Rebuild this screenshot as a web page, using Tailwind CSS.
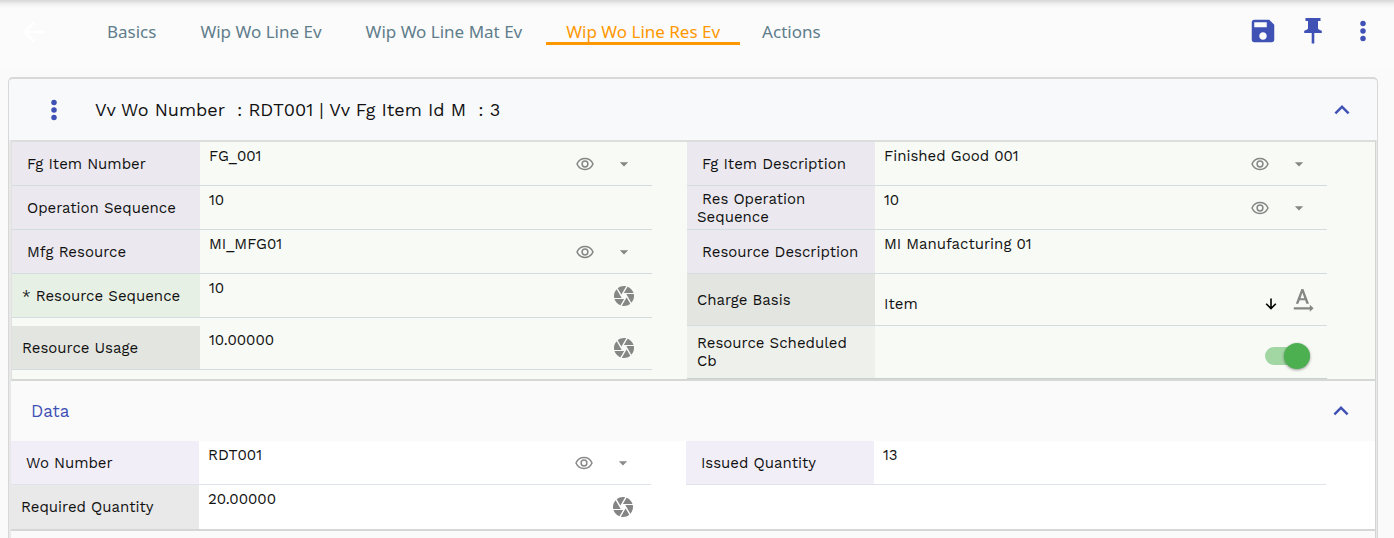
<!DOCTYPE html>
<html lang="en">
<head>
<meta charset="utf-8">
<meta name="viewport" content="width=device-width, initial-scale=1">
<title>Wip Wo Line Res Ev</title>
<script src="https://cdn.jsdelivr.net/npm/@tailwindcss/browser@4"></script>
</head>
<body class="flex h-screen flex-col overflow-hidden bg-[#fafafa] font-['Work_Sans','Open_Sans',sans-serif] text-[15px] leading-[18px] text-[#111]">
<svg class="hidden" aria-hidden="true">
  <symbol id="dots" viewBox="0 0 24 24"><circle cx="12" cy="6" r="2.2"/><circle cx="12" cy="12" r="2.2"/><circle cx="12" cy="18" r="2.2"/></symbol>
  <symbol id="up" viewBox="0 0 24 24"><path d="M12 8l-6 6 1.41 1.41L12 10.83l4.59 4.58L18 14z"/></symbol>
  <symbol id="eye" viewBox="0 0 18 14"><path d="M1 7C2.6 3.4 5.6 1.6 9 1.6S15.400 3.400 17 7c-1.600 3.600-4.600 5.400-8 5.400S2.600 10.600 1 7z" fill="none" stroke="currentColor" stroke-width="1.5"/><circle cx="9" cy="7" r="2.9" fill="none" stroke="currentColor" stroke-width="1.5"/></symbol>
  <symbol id="caret" viewBox="0 0 24 24"><path d="M7 10l5 5 5-5z"/></symbol>
  <symbol id="shutter" viewBox="0 0 24 24"><path d="M9.400 10.500l4.770-8.260C13.470 2.090 12.750 2 12 2c-2.400 0-4.600.85-6.320 2.250l3.660 6.350.06-.1zM21.540 9c-.92-2.920-3.150-5.260-6-6.340L11.880 9h9.660zm.26 1h-7.490l.29.5 4.760 8.250C21 16.970 22 14.610 22 12c0-.69-.07-1.350-.2-2zM8.540 12l-3.900-6.750C3.010 7.030 2 9.390 2 12c0 .69.07 1.350.2 2h7.490l-1.150-2zm-6.080 3c.92 2.920 3.150 5.260 6 6.340L12.120 15H2.460zm11.270 0l-3.900 6.760c.7.15 1.420.24 2.170.24 2.400 0 4.600-.85 6.320-2.250l-3.660-6.350-.93 1.600z"/></symbol>
</svg>

<header class="flex h-[77px] shrink-0 items-start bg-[linear-gradient(#d6d6d6,#f0f0f0_4px,#fbfbfb_8px,#fbfbfb_68px,#fafafa_68px)] pr-4 pl-[17px]">
  <button type="button" aria-label="Back" class="mt-4 text-white"><svg class="size-8 fill-current" viewBox="0 0 24 24"><path d="M20 11H7.830l5.590-5.590L12 4l-8 8 8 8 1.410-1.410L7.830 13H20v-2z"/></svg></button>
  <nav class="mt-4 ml-[38px] flex gap-1 font-['Segoe_UI','Noto_Sans',sans-serif] text-[17px] leading-[26px] text-[#607d8b]">
    <a href="#" class="h-[29px] px-5 pt-[3px]">Basics</a>
    <a href="#" class="h-[29px] px-5 pt-[3px]">Wip Wo Line Ev</a>
    <a href="#" class="h-[29px] px-5 pt-[3px]">Wip Wo Line Mat Ev</a>
    <a href="#" aria-current="page" class="h-[29px] border-b-[3px] border-[#ff9800] px-5 pt-[3px] text-[#ff9800]">Wip Wo Line Res Ev</a>
    <a href="#" class="h-[29px] px-[18px] pt-[3px]">Actions</a>
  </nav>
  <div class="mt-4 ml-auto flex items-center gap-5 text-[#3f51b5]">
    <button type="button" aria-label="Save"><svg class="size-[30px] fill-current" viewBox="0 0 24 24"><path d="M17 3H5c-1.110 0-2 .9-2 2v14c0 1.100.89 2 2 2h14c1.100 0 2-.9 2-2V7l-4-4zm-5 16c-1.660 0-3-1.340-3-3s1.340-3 3-3 3 1.340 3 3-1.340 3-3 3zm3-10H5V5h10v4z"/></svg></button>
    <button type="button" aria-label="Pin"><svg class="size-[30px] fill-current" viewBox="0 0 30 30"><path d="M7.500 2h15v3H20v7.500c.5 1.200 1.800 1.700 3.800 2.300V17h-7.500v10.500h-2.600V17H6.200v-2.200c2-.6 3.300-1.100 3.800-2.300V5H7.500z"/></svg></button>
    <button type="button" aria-label="More"><svg class="size-[30px] fill-current"><use href="#dots"/></svg></button>
  </div>
</header>

<main class="mr-4 ml-2 flex flex-1 flex-col rounded-t-[5px] border-x border-t-2 border-[#d8d8d8] bg-[#f8f9fb]">
  <div class="flex h-[61px] shrink-0 items-center pr-5 pl-[30px]">
    <button type="button" aria-label="Record menu" class="text-[#3f51b5]"><svg class="size-[30px] fill-current"><use href="#dots"/></svg></button>
    <h1 class="ml-[26px] text-[18px] leading-6 whitespace-pre">Vv Wo Number  : RDT001 | Vv Fg Item Id M  : 3</h1>
    <button type="button" aria-label="Collapse" class="ml-auto text-[#3f51b5]"><svg class="size-[30px] fill-current"><use href="#up"/></svg></button>
  </div>

  <div class="flex flex-1 flex-col border-r border-l-2 border-[#e8e8e8]">
    <section class="grid grid-cols-2 items-start border-x border-y-2 border-t-[#dcdedc] border-r-[#d4d4d4] border-b-[#d6d8d6] border-l-[#e0e0e0] bg-[#f7faf5] pr-[13px]">
      <div class="mr-[35px] flex h-11 border-b border-[#d3dcde]">
        <label for="f1" class="flex w-[188px] shrink-0 items-center bg-[#ebe9ef] px-[10px] indent-[5px]">Fg Item Number</label>
        <input id="f1" value="FG_001" class="h-7 min-w-0 flex-1 bg-transparent pl-[9px] outline-none">
        <div class="flex items-center gap-5 pr-[18px] text-[#848784]"><button type="button" aria-label="View"><svg class="h-[14px] w-[18px]"><use href="#eye"/></svg></button><button type="button" aria-label="Open list"><svg class="size-5 fill-current"><use href="#caret"/></svg></button></div>
      </div>
      <div class="mr-[35px] flex h-11 border-b border-[#d3dcde]">
        <label for="f2" class="flex w-[188px] shrink-0 items-center bg-[#ebe9ef] px-[10px] indent-[5px]">Fg Item Description</label>
        <input id="f2" value="Finished Good 001" class="h-7 min-w-0 flex-1 bg-transparent pl-[9px] outline-none">
        <div class="flex items-center gap-5 pr-[18px] text-[#848784]"><button type="button" aria-label="View"><svg class="h-[14px] w-[18px]"><use href="#eye"/></svg></button><button type="button" aria-label="Open list"><svg class="size-5 fill-current"><use href="#caret"/></svg></button></div>
      </div>

      <div class="mr-[35px] flex h-11 border-b border-[#d3dcde]">
        <label for="f3" class="flex w-[188px] shrink-0 items-center bg-[#ebe9ef] px-[10px] indent-[5px]">Operation Sequence</label>
        <input id="f3" value="10" class="h-7 min-w-0 flex-1 bg-transparent pl-[9px] outline-none">
      </div>
      <div class="mr-[35px] flex h-11 border-b border-[#d3dcde]">
        <label for="f4" class="flex w-[188px] shrink-0 items-center bg-[#ebe9ef] px-[10px] indent-[5px]">Res Operation Sequence</label>
        <input id="f4" value="10" class="h-7 min-w-0 flex-1 bg-transparent pl-[9px] outline-none">
        <div class="flex items-center gap-5 pr-[18px] text-[#848784]"><button type="button" aria-label="View"><svg class="h-[14px] w-[18px]"><use href="#eye"/></svg></button><button type="button" aria-label="Open list"><svg class="size-5 fill-current"><use href="#caret"/></svg></button></div>
      </div>

      <div class="mr-[35px] flex h-11 border-b border-[#d3dcde]">
        <label for="f5" class="flex w-[188px] shrink-0 items-center bg-[#ebe9ef] px-[10px] indent-[5px]">Mfg Resource</label>
        <input id="f5" value="MI_MFG01" class="h-7 min-w-0 flex-1 bg-transparent pl-[9px] outline-none">
        <div class="flex items-center gap-5 pr-[18px] text-[#848784]"><button type="button" aria-label="View"><svg class="h-[14px] w-[18px]"><use href="#eye"/></svg></button><button type="button" aria-label="Open list"><svg class="size-5 fill-current"><use href="#caret"/></svg></button></div>
      </div>
      <div class="mr-[35px] flex h-11 border-b border-[#d3dcde]">
        <label for="f6" class="flex w-[188px] shrink-0 items-center bg-[#ebe9ef] px-[10px] indent-[5px]">Resource Description</label>
        <input id="f6" value="MI Manufacturing 01" class="h-7 min-w-0 flex-1 bg-transparent pl-[9px] outline-none">
      </div>

      <div class="mr-[35px] flex h-11 border-b border-[#d3dcde]">
        <label for="f7" class="flex w-[188px] shrink-0 items-center bg-[#e7f0e4] px-[10px]">* Resource Sequence</label>
        <input id="f7" value="10" class="h-7 min-w-0 flex-1 bg-transparent pl-[9px] outline-none">
        <button type="button" aria-label="Pick value" class="pr-4 text-[#848784]"><svg class="size-6 fill-current"><use href="#shutter"/></svg></button>
      </div>
      <div class="mr-[35px] flex h-[52px] border-b border-[#d3dcde]">
        <label for="f8" class="flex w-[188px] shrink-0 items-center bg-[#e3e5e0] px-[10px]">Charge Basis</label>
        <select id="f8" class="mt-[15px] h-[30px] min-w-0 flex-1 appearance-none bg-transparent pl-[9px] outline-none"><option>Item</option></select>
        <svg class="mt-[24px] mr-[16px] h-[12px] w-[12px]" viewBox="0 0 12 12" fill="none" stroke="#000" stroke-width="1.600" aria-hidden="true"><path d="M6 .5v10M1.200 5.800L6 10.600l4.800-4.800"/></svg>
        <button type="button" aria-label="Text direction" class="mt-[14px] mr-[13px] h-6 text-[#848784]"><svg class="h-6 w-[21px]" viewBox="0 0 21 24"><path d="M2.800 15.800L8.400 1h2L16 15.800h-2.600l-1.300-3.500H6.700l-1.300 3.500zM7.500 10.200h3.800L9.400 4.800z" fill="currentColor"/><path d="M.8 19.200h16v-2.400l3.800 3.500-3.800 3.500v-2.400H.8z" fill="currentColor"/></svg></button>
      </div>

      <div class="mr-[35px] flex h-11 border-b border-[#d3dcde]">
        <label for="f9" class="flex w-[188px] shrink-0 items-center bg-[#e3e5e0] px-[10px]">Resource Usage</label>
        <input id="f9" value="10.00000" class="h-7 min-w-0 flex-1 bg-transparent pl-[9px] outline-none">
        <button type="button" aria-label="Pick value" class="pr-4 text-[#848784]"><svg class="size-6 fill-current"><use href="#shutter"/></svg></button>
      </div>
      <div class="mr-[35px] flex h-[53px] border-b border-[#c8d0d0]">
        <label for="f10" class="flex w-[188px] shrink-0 items-center bg-[#eef0eb] px-[10px]">Resource Scheduled Cb</label>
        <div class="flex flex-1 items-center justify-end pt-2 pr-[17px]">
          <input id="f10" type="checkbox" role="switch" checked class="h-[18px] w-[45px] appearance-none rounded-full bg-[#a2d7a4] before:-mt-1 before:ml-auto before:block before:size-[26px] before:rounded-full before:bg-[#4caf50] before:shadow-[0_1px_3px_rgba(0,0,0,0.4)] before:content-['']">
        </div>
      </div>
    </section>

    <section class="border-r border-[#d4d4d4]">
      <div class="flex h-[60px] items-center bg-[#fafafa] pr-[19px] pl-5">
        <h2 class="text-[17px] leading-6 text-[#3f51b5]">Data</h2>
        <button type="button" aria-label="Collapse Data" class="ml-auto text-[#3f51b5]"><svg class="size-[30px] fill-current"><use href="#up"/></svg></button>
      </div>
      <div class="grid grid-cols-2 items-start border-b-2 border-[#d6d6d6] bg-white pr-[14px]">
        <div class="mr-[35px] flex h-11 border-b border-[#dfe3ea]">
          <label for="g1" class="flex w-[188px] shrink-0 items-center bg-[#f1eef8] px-[10px] indent-[5px]">Wo Number</label>
          <input id="g1" value="RDT001" class="h-7 min-w-0 flex-1 bg-transparent pl-[9px] outline-none">
          <div class="flex items-center gap-5 pr-[18px] text-[#8a8a8a]"><button type="button" aria-label="View"><svg class="h-[14px] w-[18px]"><use href="#eye"/></svg></button><button type="button" aria-label="Open list"><svg class="size-5 fill-current"><use href="#caret"/></svg></button></div>
        </div>
        <div class="mr-[35px] flex h-11 border-b border-[#dfe3ea]">
          <label for="g2" class="flex w-[188px] shrink-0 items-center bg-[#f1eef8] px-[10px] indent-[5px]">Issued Quantity</label>
          <input id="g2" value="13" class="h-7 min-w-0 flex-1 bg-transparent pl-[9px] outline-none">
        </div>
        <div class="mr-[35px] flex h-11">
          <label for="g3" class="flex w-[188px] shrink-0 items-center bg-[#e9e9e9] px-[10px]">Required Quantity</label>
          <input id="g3" value="20.00000" class="h-7 min-w-0 flex-1 bg-transparent pl-[9px] outline-none">
          <button type="button" aria-label="Pick value" class="pr-4 text-[#848484]"><svg class="size-6 fill-current"><use href="#shutter"/></svg></button>
        </div>
      </div>
    </section>
    <div class="flex-1 border-r border-[#d4d4d4] bg-[#fafafa]"></div>
  </div>
</main>
</body>
</html>
